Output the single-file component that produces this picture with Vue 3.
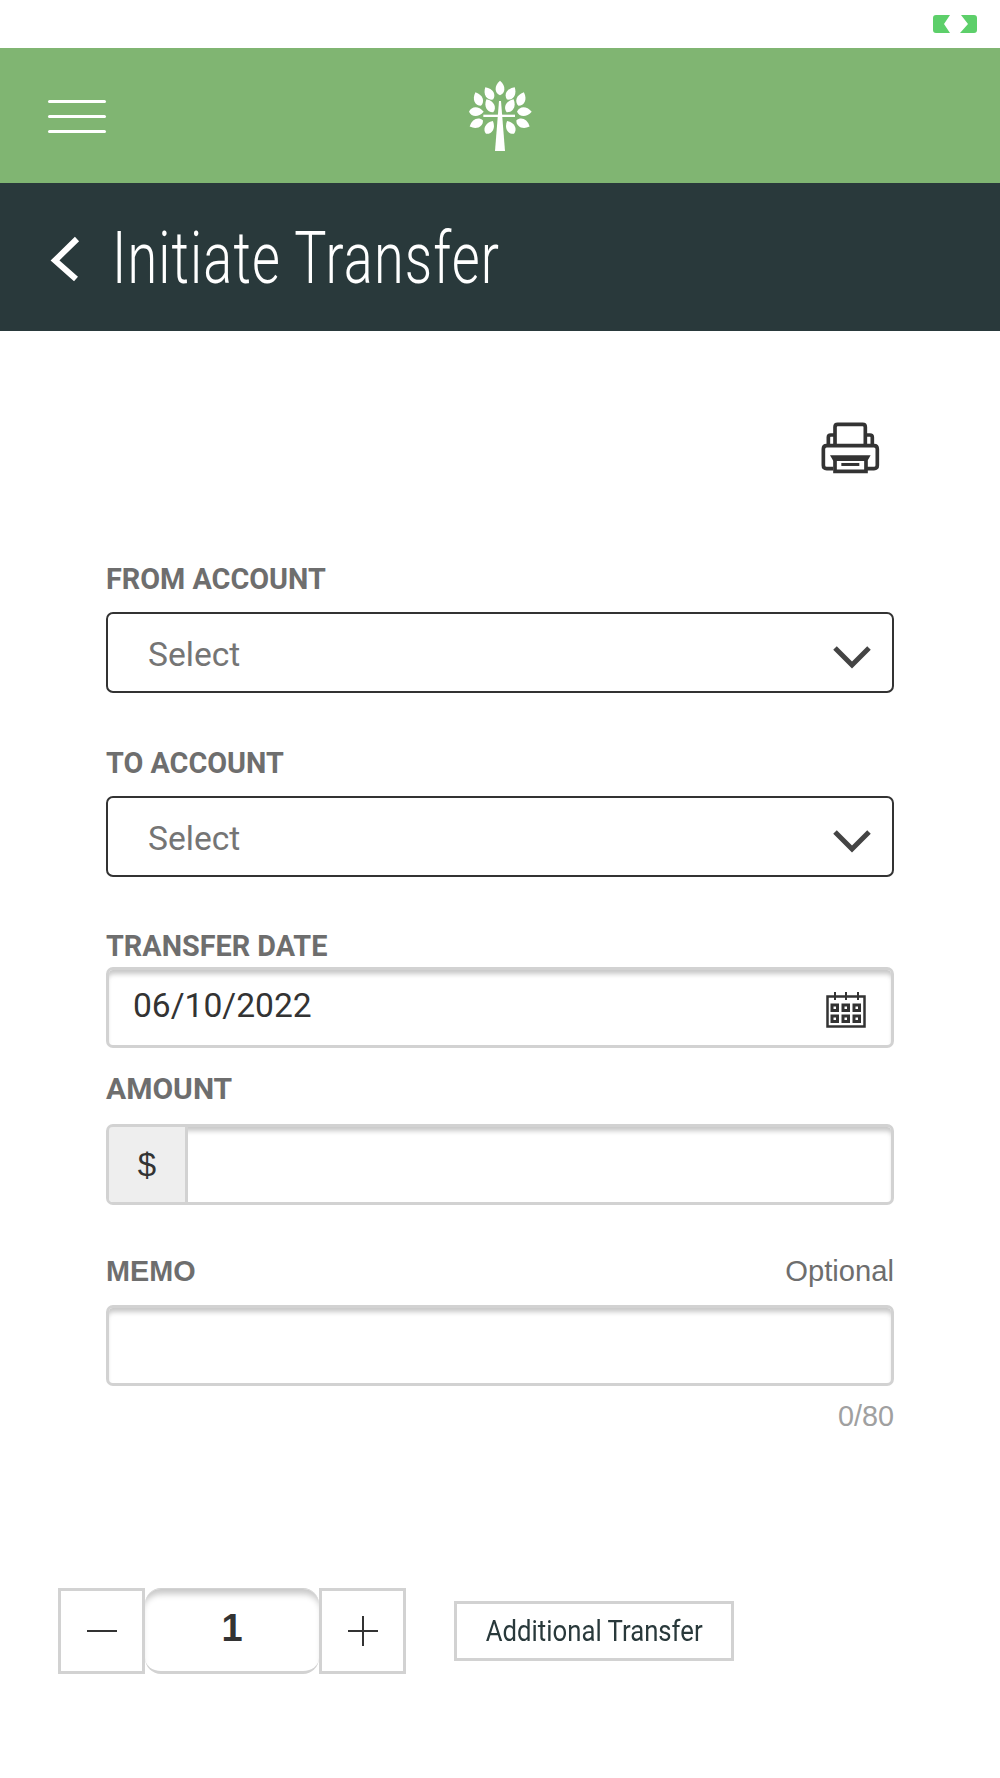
<script setup>
const leaves = [
  [150, 52, 0], [118, 68, -32], [182, 68, 32], [85, 85, -22], [213, 85, 22],
  [120, 105, -28], [180, 105, 28], [78, 122, 90], [222, 122, 90],
  [80, 157, -115], [218, 157, 115], [118, 170, 28], [182, 170, -28]
]
</script>

<template>
  <div class="page">
    <div class="status">
      <svg class="battery" viewBox="0 0 44 18" width="44" height="18">
        <path d="M3 0H17L11 9L17 18H3Q0 18 0 15V3Q0 0 3 0Z" fill="#5dcf6a" />
        <path d="M28 0H41Q44 0 44 3V15Q44 18 41 18H27L35 9Z" fill="#5dcf6a" />
      </svg>
    </div>

    <header class="topbar">
      <div class="burger"><i></i><i></i><i></i></div>
      <svg class="tree" viewBox="0 0 300 270" width="100" height="90">
        <path d="M147 90H153L165 240H135Z" fill="#fff" />
        <rect x="100" y="131" width="95" height="7" fill="#fff" />
        <path
          v-for="(l, i) in leaves"
          :key="i"
          :d="`M${l[0]} ${l[1] - 23}C${l[0] + 19} ${l[1] - 7} ${l[0] + 16} ${l[1] + 14} ${l[0]} ${l[1] + 21}C${l[0] - 16} ${l[1] + 14} ${l[0] - 19} ${l[1] - 7} ${l[0]} ${l[1] - 23}Z`"
          fill="#fff"
          :transform="`rotate(${l[2]} ${l[0]} ${l[1]})`"
        />
      </svg>
      <div></div>
    </header>

    <div class="titlebar">
      <svg class="back" viewBox="0 0 30 46" width="30" height="46">
        <path d="M27 3L5 24.500L26 43" fill="none" stroke="#fff" stroke-width="6" />
      </svg>
      <h1><span>Initiate Transfer</span></h1>
    </div>

    <main class="content">
      <div class="tools">
        <svg viewBox="120 60 180 160" width="60" height="53.300">
          <g fill="none" stroke="#333" stroke-width="11">
            <path d="M165 130V78Q165 70 173 70H248Q256 70 256 78V130" />
            <path d="M165 102H152Q145 102 145 109V133M256 102H270Q277 102 277 109V133" />
            <path d="M160 203H140Q130 203 130 193V144Q130 134 140 134H282Q292 134 292 144V193Q292 203 282 203H260" />
            <path d="M165 178V211H258V178" />
          </g>
          <path d="M150 163H272L262 180H160Z" fill="#333" />
          <rect x="184" y="186" width="54" height="9" fill="#333" />
        </svg>
      </div>

      <form class="form">
        <label class="lbl first">FROM ACCOUNT</label>
        <div class="select">
          <span>Select</span>
          <svg viewBox="0 0 40 24" width="40" height="24"><path d="M3 3L20 20L37 3" fill="none" stroke="#444" stroke-width="5" /></svg>
        </div>

        <label class="lbl second">TO ACCOUNT</label>
        <div class="select">
          <span>Select</span>
          <svg viewBox="0 0 40 24" width="40" height="24"><path d="M3 3L20 20L37 3" fill="none" stroke="#444" stroke-width="5" /></svg>
        </div>

        <label class="lbl third">TRANSFER DATE</label>
        <div class="input date">
          <span>06/10/2022</span>
          <svg viewBox="0 0 40 36" width="40" height="36">
            <g fill="none" stroke="#333">
              <rect x="1.500" y="4.500" width="37" height="30" stroke-width="2.500" />
              <path d="M9 0V8M20 0V8M32 0V8" stroke-width="2" />
              <g stroke-width="3">
                <rect x="6" y="13" width="5.500" height="5.500" />
                <rect x="17" y="13" width="5.500" height="5.500" />
                <rect x="28" y="13" width="5.500" height="5.500" />
                <rect x="6" y="24" width="5.500" height="5.500" />
                <rect x="17" y="24" width="5.500" height="5.500" />
                <rect x="28" y="24" width="5.500" height="5.500" />
              </g>
            </g>
          </svg>
        </div>

        <label class="lbl fourth">AMOUNT</label>
        <div class="amount">
          <span class="addon">$</span>
          <div class="field"></div>
        </div>

        <div class="memo-head">
          <label class="lbl memo">MEMO</label>
          <span class="optional">Optional</span>
        </div>
        <div class="input"></div>
        <div class="count">0/80</div>
      </form>

      <div class="actions">
        <div class="stepper">
          <button type="button" class="step">
            <svg viewBox="0 0 30 30" width="30" height="30"><path d="M0 15H30" stroke="#333" stroke-width="2" /></svg>
          </button>
          <div class="qty">1</div>
          <button type="button" class="step">
            <svg viewBox="0 0 30 30" width="30" height="30"><path d="M0 15H30M15 0V30" stroke="#333" stroke-width="2" /></svg>
          </button>
        </div>
        <button type="button" class="more"><span>Additional Transfer</span></button>
      </div>
    </main>
  </div>
</template>

<style>
html, body { background: #fff; }
</style>

<style scoped>
.page {
  width: 1000px;
  height: 1778px;
  overflow: hidden;
  background: #fff;
  font-family: Roboto, "Liberation Sans", sans-serif;
}
.status {
  height: 48px;
  display: flex;
  justify-content: flex-end;
  align-items: flex-start;
  padding: 15px 23px 0 0;
  box-sizing: border-box;
}
.topbar {
  height: 135px;
  background: #80b572;
  display: grid;
  grid-template-columns: 1fr auto 1fr;
  align-items: center;
  padding: 0 48px;
  box-sizing: border-box;
}
.tree { filter: blur(0.5px); }
.burger {
  width: 58px;
  display: flex;
  flex-direction: column;
  gap: 12px;
  margin-top: 2px;
}
.burger i {
  display: block;
  height: 3px;
  background: #fff;
  border-radius: 2px;
}
.titlebar {
  height: 148px;
  background: #29393b;
  display: flex;
  align-items: center;
  padding: 3px 0 0 50px;
  box-sizing: border-box;
}
.titlebar h1 {
  margin: 0 0 0 32px;
  font-size: 72px;
  line-height: 72px;
  font-weight: 300;
  letter-spacing: 1.500px;
  color: #fff;
  white-space: nowrap;
}
.titlebar h1 span {
  display: inline-block;
  transform: scaleX(0.75);
  transform-origin: left center;
}
.content { position: relative; }
.tools {
  display: flex;
  justify-content: flex-end;
  padding: 90px 120px 0 0;
  height: 143px;
  box-sizing: border-box;
}
.form {
  margin: 0 106px;
  padding-top: 90px;
  display: flex;
  flex-direction: column;
}
.lbl {
  display: block;
  height: 30px;
  line-height: 30px;
  font-size: 28.800px;
  font-weight: 700;
  color: #6e6e6e;
}
.first { margin-bottom: 18px; }
.second { margin: 55px 0 18px; }
.third { margin: 54px 0 6px; }
.fourth { margin: 26px 0 20px; font-size: 30px; }
.memo-head {
  margin: 51px 0 19px;
  display: flex;
  justify-content: space-between;
  align-items: center;
  height: 30px;
}
.memo { font-family: "Liberation Sans", sans-serif; }
.optional {
  font-family: "Liberation Sans", sans-serif;
  font-size: 29.200px;
  line-height: 30px;
  color: #6e6e6e;
}
.select {
  height: 81px;
  box-sizing: border-box;
  border: 2px solid #333;
  border-radius: 7px;
  display: flex;
  align-items: center;
  justify-content: space-between;
  padding: 0 20px 0 40px;
  font-size: 33.600px;
  color: #757575;
}
.select span { padding-top: 3px; }
.select svg { margin-top: 9px; }
.input, .amount {
  height: 81px;
  box-sizing: border-box;
  border: 3px solid #d2d2d2;
  border-radius: 7px;
  box-shadow: inset 0 6px 5px -2px rgba(0, 0, 0, 0.22);
}
.date {
  display: flex;
  align-items: center;
  justify-content: space-between;
  padding: 0 25px 4px 24px;
  font-size: 33.600px;
  color: #333;
}
.date svg { margin-top: 8px; }
.amount {
  display: flex;
  overflow: hidden;
}
.addon {
  width: 79px;
  flex: none;
  background: #eee;
  border-right: 3px solid #d2d2d2;
  box-sizing: border-box;
  display: flex;
  align-items: center;
  justify-content: center;
  font-family: "Liberation Sans", sans-serif;
  font-size: 33px;
  color: #333;
}
.field { flex: 1; }
.count {
  margin-top: 14px;
  text-align: right;
  font-family: "Liberation Sans", sans-serif;
  font-size: 28.800px;
  line-height: 32px;
  color: #a0a0a0;
}
.actions {
  position: absolute;
  left: 58px;
  top: 1257px;
  display: flex;
  align-items: center;
  gap: 48px;
}
.stepper { display: flex; align-items: stretch; }
.step {
  width: 87px;
  height: 86px;
  padding: 0;
  background: #fff;
  border: 3px solid #d2d2d2;
  display: flex;
  align-items: center;
  justify-content: center;
}
.qty {
  width: 174px;
  height: 86px;
  box-sizing: border-box;
  border: solid #d2d2d2;
  border-width: 1px 0 3px;
  border-radius: 16px;
  box-shadow: inset 0 8px 6px -3px rgba(0, 0, 0, 0.22);
  text-align: center;
  font-family: "Liberation Sans", sans-serif;
  font-weight: 700;
  font-size: 38px;
  line-height: 78px;
  color: #333;
}
.more {
  width: 280px;
  height: 60px;
  padding: 0;
  background: #fff;
  border: 3px solid #d2d2d2;
  font-family: Roboto, sans-serif;
  font-size: 29px;
  color: #29393b;
  white-space: nowrap;
}
.more span {
  display: inline-block;
  transform: scaleX(0.887);
}
</style>
